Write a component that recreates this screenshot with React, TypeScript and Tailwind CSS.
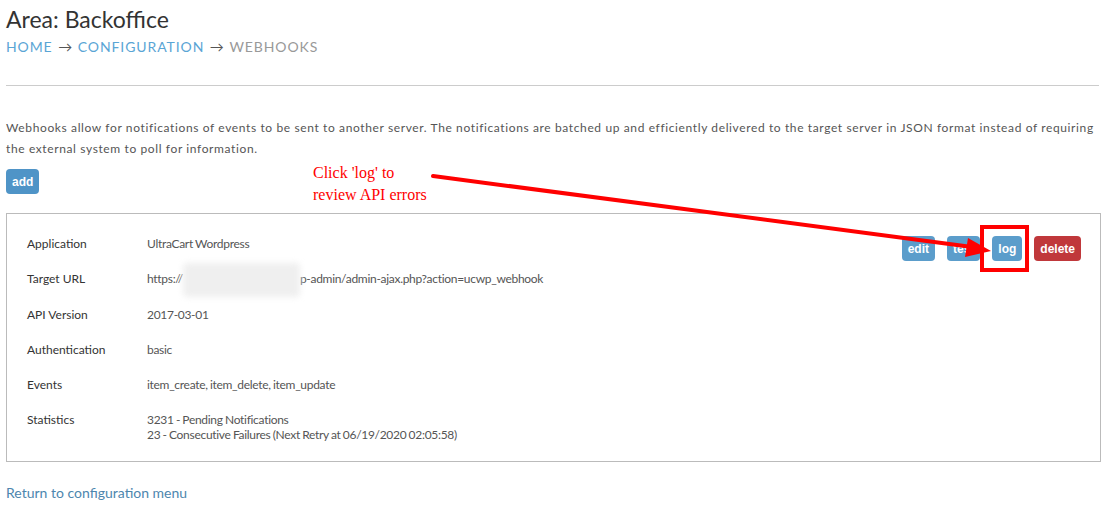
import type { ReactNode } from 'react';

type DetailRow = {
  label: string;
  value: ReactNode;
};

const lato = "font-['Lato','Open_Sans',sans-serif]";

function RedactedUrl() {
  return (
    <span>
      https://
      <span className="relative inline-block h-[14px] w-[117px] align-middle">
        <span className="absolute -top-[10px] left-0 h-[34px] w-[117px] rounded-sm bg-[#efefef] blur-[3px]" />
      </span>
      p-admin/admin-ajax.php?action=ucwp_webhook
    </span>
  );
}

const rows: DetailRow[] = [
  { label: 'Application', value: 'UltraCart Wordpress' },
  { label: 'Target URL', value: <RedactedUrl /> },
  { label: 'API Version', value: '2017-03-01' },
  { label: 'Authentication', value: 'basic' },
  { label: 'Events', value: 'item_create, item_delete, item_update' },
  {
    label: 'Statistics',
    value: (
      <>
        <div>3231 - Pending Notifications</div>
        <div>23 - Consecutive Failures (Next Retry at 06/19/2020 02:05:58)</div>
      </>
    ),
  },
];

function ActionButton({ children, danger = false }: { children: ReactNode; danger?: boolean }) {
  return (
    <button
      type="button"
      className={
        danger
          ? "h-[25px] rounded-[4px] bg-[#c0383b] px-[6px] font-['Liberation_Sans',Arial,sans-serif] text-[12px] font-bold text-white"
          : "h-[25px] rounded-[4px] bg-[#5b9dcb] px-[6px] font-['Liberation_Sans',Arial,sans-serif] text-[12px] font-bold text-white"
      }
    >
      {children}
    </button>
  );
}

// red callout drawn over the page: note, arrow and the box around "log"
function Callout() {
  return (
    <>
      <div className="pointer-events-none absolute left-[313px] top-[162px] font-['Liberation_Serif','Times_New_Roman',serif] text-[16px] leading-[22px] text-[#ff0000]">
        <div>Click 'log' to</div>
        <div>review API errors</div>
      </div>
      <svg className="pointer-events-none absolute left-0 top-0" width="1105" height="505" viewBox="0 0 1105 505">
        <line x1="433" y1="176" x2="972" y2="247" stroke="#ff0000" strokeWidth="4" strokeLinecap="round" />
        <polygon points="991,251 968,238 965,257" fill="#ff0000" />
        <rect x="982" y="227" width="45" height="43" fill="none" stroke="#ff0000" strokeWidth="4" />
      </svg>
    </>
  );
}

export default function App() {
  return (
    <div className={`relative h-[505px] w-[1105px] overflow-hidden bg-white px-[6px] pt-[4px] ${lato}`}>
      <h1 className="text-[23px] leading-[30px] font-normal text-[#333]">Area: Backoffice</h1>
      <nav className="mt-[2px] text-[14px] leading-[22px] tracking-[0.9px] uppercase">
        <a className="text-[#5aa5d5]">Home</a>
        <span className="px-[2px] tracking-normal text-[#555]"> → </span>
        <a className="text-[#5aa5d5]">Configuration</a>
        <span className="px-[2px] tracking-normal text-[#555]"> → </span>
        <span className="text-[#999]">Webhooks</span>
      </nav>
      <hr className="mt-[27px] border-t border-[#ccc]" />

      <p className="mt-[31px] w-[1099px] text-[12px] leading-[21px] tracking-[0.62px] text-[#555]">
        Webhooks allow for notifications of events to be sent to another server. The notifications are batched up and
        efficiently delivered to the target server in JSON format instead of requiring the external system to poll for
        information.
      </p>

      <button
        type="button"
        className="mt-[10px] h-[25px] rounded-[4px] bg-[#4f94c7] px-[6px] font-['Liberation_Sans',Arial,sans-serif] text-[12px] font-bold text-white"
      >
        add
      </button>

      <div className="mt-[19px] flex w-[1095px] border border-[#bbb] pr-[19px] pb-[9px] pl-[20px] pt-[12px]">
        <div className="flex-1">
          {rows.map((row) => (
            <div key={row.label} className="flex py-[10px] text-[12px] leading-[15px]">
              <div className="w-[120px] shrink-0 text-[#333]">{row.label}</div>
              <div className="tracking-[-0.3px] text-[#555] [word-spacing:-0.5px]">{row.value}</div>
            </div>
          ))}
        </div>
        <div className="mt-[10px] flex h-[25px] gap-[12px]">
          <ActionButton>edit</ActionButton>
          <ActionButton>test</ActionButton>
          <ActionButton>log</ActionButton>
          <ActionButton danger>delete</ActionButton>
        </div>
      </div>

      <a className="mt-[21px] block text-[14px] leading-[20px] text-[#4d86ae]">Return to configuration menu</a>

      <Callout />
    </div>
  );
}
